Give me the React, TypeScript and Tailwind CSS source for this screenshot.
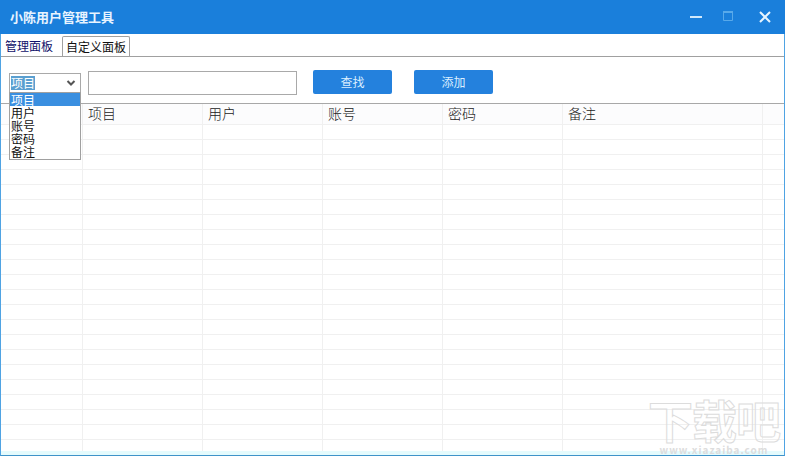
const font = "font-['Noto_Sans_CJK_SC','Noto_Sans_CJK_SC',sans-serif]";
const columns = [
  { w: "w-[82px]", label: "" },
  { w: "w-[120px]", label: "项目" },
  { w: "w-[120px]", label: "用户" },
  { w: "w-[120px]", label: "账号" },
  { w: "w-[120px]", label: "密码" },
  { w: "w-[200px]", label: "备注" },
  { w: "flex-1", label: "" },
];
const rows = Array.from({ length: 21 });
const options = ["项目", "用户", "账号", "密码", "备注"];

function Row({ header = false, last = false }: { header?: boolean; last?: boolean }) {
  const size = header ? "h-[21px] bg-[#fcfcfd] border-b" : last ? "h-[11px]" : "h-[15px] border-b";
  return (
    <div className={`flex shrink-0 border-[#f0f0f0] ${size}`}>
      {columns.map((c, i) => (
        <div
          key={i}
          className={`${c.w} shrink-0 border-r border-[#f0f0f0] pl-[5px] text-[14px] font-light leading-[18px] text-[#222] ${i === 6 ? "border-r-0" : ""}`}
        >
          {header ? c.label : ""}
        </div>
      ))}
    </div>
  );
}

export default function App() {
  return (
    <div className={`relative flex h-[456px] w-[785px] flex-col overflow-hidden bg-white ${font}`}>
      <div className="flex h-[34px] shrink-0 items-center justify-between bg-[#1a7fdb] pl-[10px] pr-[14px]">
        <span className="text-[13px] font-bold text-[#e8f4ff]">小陈用户管理工具</span>
        <div className="flex items-center gap-[20px]">
          <svg width="12" height="12" viewBox="0 0 12 12"><path d="M0 6h12" stroke="#cfe8fb" strokeWidth="2" /></svg>
          <svg width="10" height="10" viewBox="0 0 10 10" className="mb-[3px] ml-[1px] mr-[6px]" fill="none"><path d="M.5 1.500h9v8h-9z" stroke="#58a9ea" /><path d="M0 1h10" stroke="#58a9ea" strokeWidth="2" /></svg>
          <svg width="12" height="12" viewBox="0 0 12 12"><path d="M1 1l10 10M11 1L1 11" stroke="#e6f5ff" strokeWidth="2" /></svg>
        </div>
      </div>

      <div className="flex min-h-0 flex-1 flex-col border-x border-b border-x-[#4fa3e3] border-b-[#3f93c9]">
        <div className="flex h-[23px] shrink-0 items-end border-b border-[#a0a0a0]">
          <div className="flex h-[22px] w-[61px] items-start justify-start bg-white pl-[4px] pt-[3px] text-[12px] text-[#10106a]">管理面板</div>
          <div className="flex h-[20px] w-[68px] items-center justify-center rounded-t-[2px] border border-b-0 border-[#a0a0a0] text-[12px] text-[#111]">自定义面板</div>
        </div>

        <div className="flex h-[47px] shrink-0 items-start border-b border-[#a8a8a8] pl-[8px]">
          <div className="mt-[16px] flex h-[20px] w-[72px] items-center justify-between border border-[#a9a9a9] pl-[1px] pr-[4px]">
            <span className="bg-[#5a9fd0] text-[12px] leading-[14px] text-white">项目</span>
            <svg width="10" height="8" viewBox="0 0 10 8" fill="none"><path d="M1.500 2l3.500 3.500L8.500 2" stroke="#555" strokeWidth="2" /></svg>
          </div>
          <div className="ml-[7px] mt-[14px] h-[24px] w-[209px] border border-[#a9a9a9]" />
          <button className="ml-[16px] mt-[13px] h-[24px] w-[79px] rounded-[2px] bg-[#2481dd] text-[12px] text-[#d9eeff]">查找</button>
          <button className="ml-[22px] mt-[13px] h-[24px] w-[79px] rounded-[2px] bg-[#2481dd] text-[12px] text-[#d9eeff]">添加</button>
        </div>

        <div className="flex min-h-0 flex-1 flex-col overflow-hidden">
          <Row header />
          {rows.map((_, i) => <Row key={i} />)}
          <Row last />
          <div className="flex-1 bg-[#e4fbfd]" />
        </div>
      </div>

      <div className="absolute left-[9px] top-[92px] w-[72px] border border-[#a0a0a0] bg-white pb-[1px] text-[12px] leading-[13px] text-[#111]">
        {options.map((o, i) => (
          <div key={o} className={`pl-[1px] ${i === 0 ? "bg-[#3a8fe0] text-white" : ""}`}>{o}</div>
        ))}
      </div>

      <div className="absolute left-[648px] top-[394px] flex flex-col items-center leading-none">
        <span className="h-[50px] text-[45px] font-bold leading-[52px] tracking-[-1px] text-transparent [-webkit-text-stroke:1px_#dcdcdc]">下载吧</span>
        <span className="text-[10px] font-bold leading-[12px] tracking-[1px] text-[#dddddd]">www.xiazaiba.com</span>
      </div>
    </div>
  );
}
